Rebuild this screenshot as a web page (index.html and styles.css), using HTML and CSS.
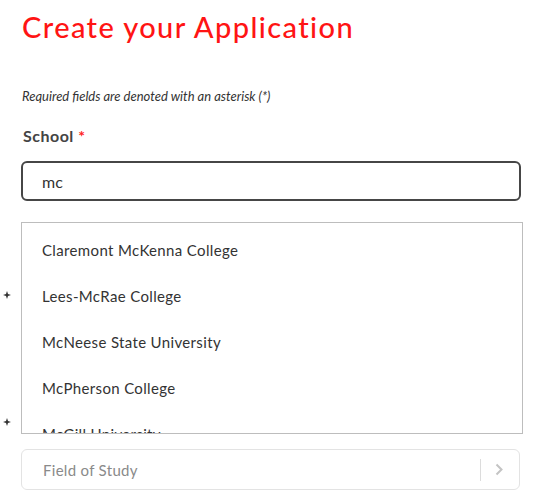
FILE: index.html
```html
<!DOCTYPE html>
<html lang="en">
<head>
    <meta charset="UTF-8">
    <meta name="viewport" content="width=device-width, initial-scale=1.0">
    <title>Create your Application</title>
    <link rel="stylesheet" href="styles.css">
</head>
<body>
    <div class="page">
        <h1>Create your Application</h1>
        <p class="note">Required fields are denoted with an asterisk (*)</p>

        <div class="form-group">
            <label for="school">School <span class="req">*</span></label>
            <input type="text" id="school" class="school-input" value="mc">
        </div>

        <div class="results-wrap">
            <svg class="spark spark-one" width="8" height="8" viewBox="0 0 8 8">
                <path d="M4 0 L5 3 L8 4 L5 5 L4 8 L3 5 L0 4 L3 3 Z" fill="#333"/>
            </svg>
            <svg class="spark spark-two" width="8" height="8" viewBox="0 0 8 8">
                <path d="M4 0 L5 3 L8 4 L5 5 L4 8 L3 5 L0 4 L3 3 Z" fill="#333"/>
            </svg>
            <ul class="results">
                <li>Claremont McKenna College</li>
                <li>Lees-McRae College</li>
                <li>McNeese State University</li>
                <li>McPherson College</li>
                <li>McGill University</li>
            </ul>
        </div>

        <div class="select">
            <span class="placeholder">Field of Study</span>
            <span class="divider"></span>
            <svg class="chevron" width="8" height="13" viewBox="0 0 8 13">
                <path d="M1.5 1.5 L6.5 6.5 L1.5 11.5" fill="none" stroke="#c4c4c4" stroke-width="2"/>
            </svg>
        </div>
    </div>
</body>
</html>
```

FILE: styles.css
```css
body {
    margin: 0;
    background: #fff;
    font-family: Lato, "Open Sans", sans-serif;
    color: #333;
}
.page {
    width: 502px;
    padding: 0 0 0 21px;
}
h1 {
    margin: 0;
    padding-top: 9px;
    font-size: 29px;
    font-weight: 500;
    letter-spacing: 1.4px;
    color: #ff1414;
    line-height: 36px;
    padding-left: 1px;
}
.note {
    margin: 43px 0 0 1px;
    font-size: 13px;
    font-style: italic;
    line-height: 17px;
    color: #333;
}
.form-group {
    margin-top: 22px;
}
label {
    display: block;
    margin-left: 2px;
    font-size: 16px;
    font-weight: bold;
    letter-spacing: 0.5px;
    color: #444;
    line-height: 18px;
}
.req {
    color: #f22;
}
.school-input {
    display: block;
    margin-top: 16px;
    width: 500px;
    height: 40px;
    box-sizing: border-box;
    border: 2px solid #464646;
    border-radius: 6px;
    padding: 0 19px;
    font-family: inherit;
    font-size: 16px;
    color: #333;
    outline: none;
}
.results-wrap {
    position: relative;
    margin-top: 21px;
}
.results {
    list-style: none;
    margin: 0;
    padding: 0;
    width: 502px;
    height: 212px;
    box-sizing: border-box;
    border: 1px solid #bdbdbd;
    overflow: hidden;
}
.results li {
    height: 46px;
    line-height: 46px;
    padding-left: 20px;
    font-size: 15px;
    letter-spacing: 0.35px;
    color: #333;
}
.results li:first-child {
    margin-top: 4px;
}
.spark {
    position: absolute;
    left: -18px;
}
.spark-one {
    top: 69px;
}
.spark-two {
    top: 196px;
}
.select {
    display: flex;
    align-items: center;
    margin-top: 15px;
    width: 499px;
    height: 41px;
    box-sizing: border-box;
    border: 1px solid #e3e3e3;
    border-radius: 6px;
    padding: 0 16px 0 21px;
}
.placeholder {
    flex: 1;
    font-size: 15px;
    letter-spacing: 0.3px;
    color: #8a8a8a;
}
.divider {
    width: 1px;
    height: 22px;
    background: #dcdcdc;
    margin-right: 14px;
}
```
